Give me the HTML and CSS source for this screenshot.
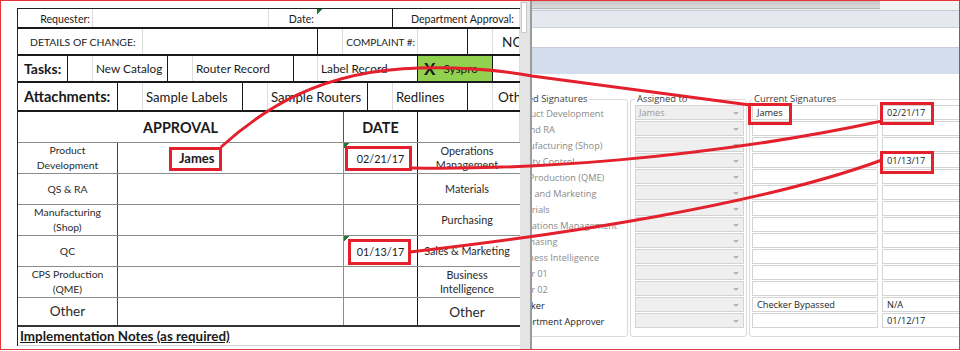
FILE: index.html
```html
<!DOCTYPE html>
<html lang="en">
<head>
    <meta charset="UTF-8">
    <title>Change Request - Signatures</title>
    <link rel="stylesheet" href="styles.css">
</head>
<body>
    <div class="frame">
        <!-- spreadsheet form -->
        <div class="sheet">
            <div class="grid">
                <div class="row r-req">
                    <div class="cell end">Requester:</div>
                    <div class="cell"></div>
                    <div class="cell end nb">Date:</div>
                    <div class="cell dk flag"></div>
                    <div class="cell end">Department Approval:</div>
                </div>
                <div class="row r-details">
                    <div class="cell pad-l">DETAILS OF CHANGE:</div>
                    <div class="cell dk"></div>
                    <div class="cell"></div>
                    <div class="cell end">COMPLAINT #:</div>
                    <div class="cell dk"></div>
                    <div class="cell"></div>
                    <div class="cell big pad-n">NCR #:</div>
                </div>
                <div class="row r-tasks">
                    <div class="cell dk head pad-h">Tasks:</div>
                    <div class="cell"></div>
                    <div class="cell dk pad">New Catalog</div>
                    <div class="cell"></div>
                    <div class="cell dk pad">Router Record</div>
                    <div class="cell"></div>
                    <div class="cell dk pad">Label Record</div>
                    <div class="cell dk done"><b>X</b>Syspro</div>
                    <div class="cell"></div>
                </div>
                <div class="row r-attach">
                    <div class="cell dk head pad-a">Attachments:</div>
                    <div class="cell"></div>
                    <div class="cell dk pad">Sample Labels</div>
                    <div class="cell"></div>
                    <div class="cell dk pad">Sample Routers</div>
                    <div class="cell"></div>
                    <div class="cell dk pad">Redlines</div>
                    <div class="cell"></div>
                    <div class="cell big pad-o">Other</div>
                </div>
                <div class="row r-head">
                    <div class="cell mid title mid-line">APPROVAL</div>
                    <div class="cell mid title dk">DATE</div>
                    <div class="cell"></div>
                </div>
                <div class="row r-appr">
                    <div class="cell mid dept">Product<br>Development</div>
                    <div class="cell sign"><span class="signer">James</span></div>
                    <div class="cell dk date flag">02/21/17</div>
                    <div class="cell mid dept-r">Operations<br>Management</div>
                </div>
                <div class="row r-appr">
                    <div class="cell mid dept">QS &amp; RA</div>
                    <div class="cell sign"></div>
                    <div class="cell dk date"></div>
                    <div class="cell mid dept-r">Materials</div>
                </div>
                <div class="row r-appr">
                    <div class="cell mid dept">Manufacturing<br>(Shop)</div>
                    <div class="cell sign"></div>
                    <div class="cell dk date"></div>
                    <div class="cell mid dept-r">Purchasing</div>
                </div>
                <div class="row r-appr">
                    <div class="cell mid dept">QC</div>
                    <div class="cell sign"></div>
                    <div class="cell dk date flag">01/13/17</div>
                    <div class="cell mid dept-r">Sales &amp; Marketing</div>
                </div>
                <div class="row r-appr">
                    <div class="cell mid dept">CPS Production<br>(QME)</div>
                    <div class="cell sign"></div>
                    <div class="cell dk date"></div>
                    <div class="cell mid dept-r">Business<br>Intelligence</div>
                </div>
                <div class="row r-appr r-other">
                    <div class="cell mid dept big">Other</div>
                    <div class="cell sign"></div>
                    <div class="cell dk date"></div>
                    <div class="cell mid dept-r big">Other</div>
                </div>
                <div class="row r-notes">
                    <div class="cell nb notes">Implementation Notes (as required)</div>
                </div>
            </div>
        </div>

        <div class="scroll"><div class="thumb"></div></div>

        <!-- signature window -->
        <div class="app">
            <div class="tabs"><div class="tab-strip"></div></div>
            <div class="ribbon"></div>
            <div class="toolbar"></div>
            <div class="band"></div>
            <div class="app-body">
                <fieldset class="group g-labels">
                    <legend>Required Signatures</legend>
                    <div class="lbl">Product Development</div>
                    <div class="lbl">QS and RA</div>
                    <div class="lbl">Manufacturing (Shop)</div>
                    <div class="lbl">Quality Control</div>
                    <div class="lbl">CPS Production (QME)</div>
                    <div class="lbl">Sales and Marketing</div>
                    <div class="lbl">Materials</div>
                    <div class="lbl">Operations Management</div>
                    <div class="lbl">Purchasing</div>
                    <div class="lbl">Business Intelligence</div>
                    <div class="lbl">Other 01</div>
                    <div class="lbl">Other 02</div>
                    <div class="lbl on">Checker</div>
                    <div class="lbl on">Department Approver</div>
                </fieldset>
                <fieldset class="group g-assigned">
                    <legend>Assigned to</legend>
                    <div class="combo">James</div>
                    <div class="combo"></div>
                    <div class="combo"></div>
                    <div class="combo"></div>
                    <div class="combo"></div>
                    <div class="combo"></div>
                    <div class="combo"></div>
                    <div class="combo"></div>
                    <div class="combo"></div>
                    <div class="combo"></div>
                    <div class="combo"></div>
                    <div class="combo"></div>
                    <div class="combo"></div>
                    <div class="combo"></div>
                </fieldset>
                <fieldset class="group g-current">
                    <legend>Current Signatures</legend>
                    <div class="sig"><div class="field">James</div><div class="field">02/21/17</div></div>
                    <div class="sig"><div class="field"></div><div class="field"></div></div>
                    <div class="sig"><div class="field"></div><div class="field"></div></div>
                    <div class="sig"><div class="field"></div><div class="field">01/13/17</div></div>
                    <div class="sig"><div class="field"></div><div class="field"></div></div>
                    <div class="sig"><div class="field"></div><div class="field"></div></div>
                    <div class="sig"><div class="field"></div><div class="field"></div></div>
                    <div class="sig"><div class="field"></div><div class="field"></div></div>
                    <div class="sig"><div class="field"></div><div class="field"></div></div>
                    <div class="sig"><div class="field"></div><div class="field"></div></div>
                    <div class="sig"><div class="field"></div><div class="field"></div></div>
                    <div class="sig"><div class="field"></div><div class="field"></div></div>
                    <div class="sig"><div class="field">Checker Bypassed</div><div class="field">N/A</div></div>
                    <div class="sig"><div class="field"></div><div class="field">01/12/17</div></div>
                </fieldset>
            </div>
        </div>

        <!-- red annotations drawn over both windows -->
        <svg class="marks" width="960" height="351" viewBox="0 0 960 351">
            <g fill="none" stroke="#e3202c" stroke-width="3">
                <rect x="170.5" y="148.5" width="50" height="21"/>
                <rect x="346.5" y="147.5" width="64" height="22"/>
                <rect x="349.5" y="240.5" width="60" height="23"/>
                <rect x="749.5" y="104.5" width="41" height="19"/>
                <rect x="881.5" y="103.5" width="51" height="20"/>
                <rect x="881.5" y="152.5" width="51" height="20"/>
                <path d="M221,147 C262,110 320,70 420,68 C470,67 505,71 532,76 L750,105"/>
                <path d="M411,168 C520,170 700,160 882,121"/>
                <path d="M410,252 C560,235 760,205 882,160"/>
            </g>
        </svg>
    </div>
</body>
</html>
```

FILE: styles.css
```css
* {
    box-sizing: border-box;
}

body {
    margin: 0;
    background: #fff;
    font-family: Lato, "Liberation Sans", sans-serif;
    color: #1a1a1a;
}

.frame {
    position: relative;
    display: flex;
    width: 960px;
    height: 350px;
    border: 1px solid #e3343c;
    overflow: hidden;
}

/* ---------- spreadsheet ---------- */

.sheet {
    flex: none;
    width: 519px;
    padding: 7px 0 0 16px;
    overflow: hidden;
    background: #fff;
}

.grid {
    width: 503px;
    border-left: 1px solid #222;
    border-top: 1px solid #222;
}

.row {
    display: grid;
    border-bottom: 2px solid #1a1a1a;
}

.cell {
    display: flex;
    align-items: center;
    overflow: hidden;
    white-space: nowrap;
    border-right: 1px solid #dddddd;
    font-size: 11.6px;
}

    .cell.dk { border-right-color: #1a1a1a; }
    .cell.nb { border-right-color: transparent; }
    .cell.end { justify-content: flex-end; padding-right: 2px; }
    .cell.mid { justify-content: center; text-align: center; }
    .cell.pad { padding-left: 3px; }
    .cell.big { font-size: 13.6px; }
    .cell.head { font-weight: bold; font-size: 14px; }
    .cell.pad-h { padding-left: 6px; }
    .cell.pad-a { padding-left: 6px; font-size: 14.6px; }
    .cell.pad-l { padding-left: 12px; font-size: 10.4px; }
    .cell.pad-o { padding-left: 5px; }
    .cell.pad-n { padding-left: 9px; }

    .cell.flag {
        background: linear-gradient(135deg, #1f7a33 4px, transparent 4px) no-repeat;
    }

.r-req {
    height: 20px;
    grid-template-columns: 75px 176px 48px 76px 1fr;
}

    .r-req .cell { font-size: 10.6px; padding-top: 1px; }
    .r-req .cell:last-child { padding-right: 5px; }

.r-details {
    height: 27px;
    grid-template-columns: 125px 175px 25px 75px 50px 25px 1fr;
}

    .r-details .end { font-size: 10px; padding-right: 2px; }

.r-tasks {
    height: 27px;
    grid-template-columns: 50px 25px 75px 25px 101px 24px 100px 75px 1fr;
}

    .r-tasks .pad { font-size: 11.8px; }

.done {
    background: #92d050;
    padding-left: 6px;
    font-size: 11.8px;
}

    .done b {
        font-size: 17px;
        margin-right: 8px;
    }

.r-attach {
    height: 29px;
    grid-template-columns: 100px 25px 100px 25px 100px 25px 75px 25px 1fr;
}

    .r-attach .pad { font-size: 13.2px; }

.r-head {
    height: 31px;
    grid-template-columns: 326px 74px 1fr;
    border-bottom: 1px solid #8c8c8c;
}

    .r-head .title { font-weight: bold; font-size: 14.4px; }
    .r-head .mid-line { border-right-color: #555; }

.r-appr {
    height: 31px;
    grid-template-columns: 100px 226px 74px 1fr;
    border-bottom: 1px solid #8c8c8c;
}

    .r-appr .dept {
        font-size: 10.4px;
        line-height: 15px;
        color: #2a2a2a;
        border-right-color: #444;
    }

    .r-appr .sign { border-right-color: #8c8c8c; }

    .r-appr .date {
        justify-content: center;
        font-size: 10.8px;
    }

    .r-appr .dept-r {
        font-size: 10.8px;
        line-height: 14px;
        color: #2a2a2a;
        padding-right: 4px;
        border-right: none;
    }

    .r-appr .big { font-size: 13.6px; }

.r-other {
    height: 29px;
    border-bottom: 2px solid #333;
}

.signer {
    margin-left: 61px;
    font-weight: bold;
    font-size: 13px;
}

.r-notes {
    display: flex;
    height: 19px;
    border-bottom: 1px solid #d6d6d6;
}

.notes {
    padding-left: 2px;
    font-weight: bold;
    font-size: 13.4px;
    text-decoration: underline;
}

/* ---------- scrollbar ---------- */

.scroll {
    flex: none;
    width: 12px;
    padding: 1px 3px 0 1px;
    background: #e4e4e4;
    border-right: 2px solid #9b9b9b;
}

.thumb {
    height: 31px;
    background: #fff;
    border: 1px solid #c9c9c9;
}

/* ---------- signature window ---------- */

.app {
    flex: 1;
    overflow: hidden;
    background: #fff;
    font-family: "Open Sans", "Noto Sans", sans-serif;
    font-size: 9.2px;
}

.tabs {
    height: 10px;
    background: #f2f2f2;
    border-bottom: 1px solid #c3ccd8;
}

.tab-strip {
    width: 348px;
    height: 8px;
    background: linear-gradient(#c6c6c6, #dadada);
    border-bottom: 1px solid #b5b5b5;
}

.ribbon {
    height: 17px;
    background: #e5e9ef;
    border-bottom: 1px solid #c8d0db;
}

.toolbar {
    height: 20px;
    background: #fff;
    border-bottom: 1px solid #c4cdd9;
}

.band {
    height: 26px;
    background: #d2deec;
}

.app-body {
    display: flex;
    gap: 2px;
    margin-left: -40px;
    padding-top: 19px;
}

.group {
    margin: 0;
    padding: 0 2px 7px 4px;
    border: 1px solid #dadada;
    border-radius: 3px;
}

    .group legend {
        padding: 0 2px;
        line-height: 12px;
        color: #3c3c3c;
        font-size: 9.4px;
    }

.g-labels {
    width: 136px;
    flex: none;
}

.lbl {
    height: 16px;
    line-height: 17px;
    padding-left: 13px;
    color: #8a8a8a;
    white-space: nowrap;
}

    .lbl.on { color: #1e1e1e; }

.g-assigned {
    width: 117px;
    flex: none;
}

.combo {
    position: relative;
    height: 15px;
    margin-bottom: 1px;
    padding-left: 3px;
    line-height: 14px;
    color: #9a9a9a;
    background: #efefef;
    border: 1px solid #d3d3d3;
}

    .combo::after {
        content: "";
        position: absolute;
        right: 4px;
        top: 6px;
        border-left: 3px solid transparent;
        border-right: 3px solid transparent;
        border-top: 3px solid #b5b5b5;
    }

.g-current {
    width: 300px;
    flex: none;
    padding-left: 2px;
}

.sig {
    display: grid;
    grid-template-columns: 126px 130px;
    gap: 4px;
    margin-bottom: 1px;
}

.field {
    height: 15px;
    padding-left: 4px;
    line-height: 14px;
    color: #1e1e1e;
    background: #fff;
    border: 1px solid #d4d4d4;
    white-space: nowrap;
}

/* ---------- annotation layer ---------- */

.marks {
    position: absolute;
    left: -1px;
    top: -1px;
    pointer-events: none;
}
```
